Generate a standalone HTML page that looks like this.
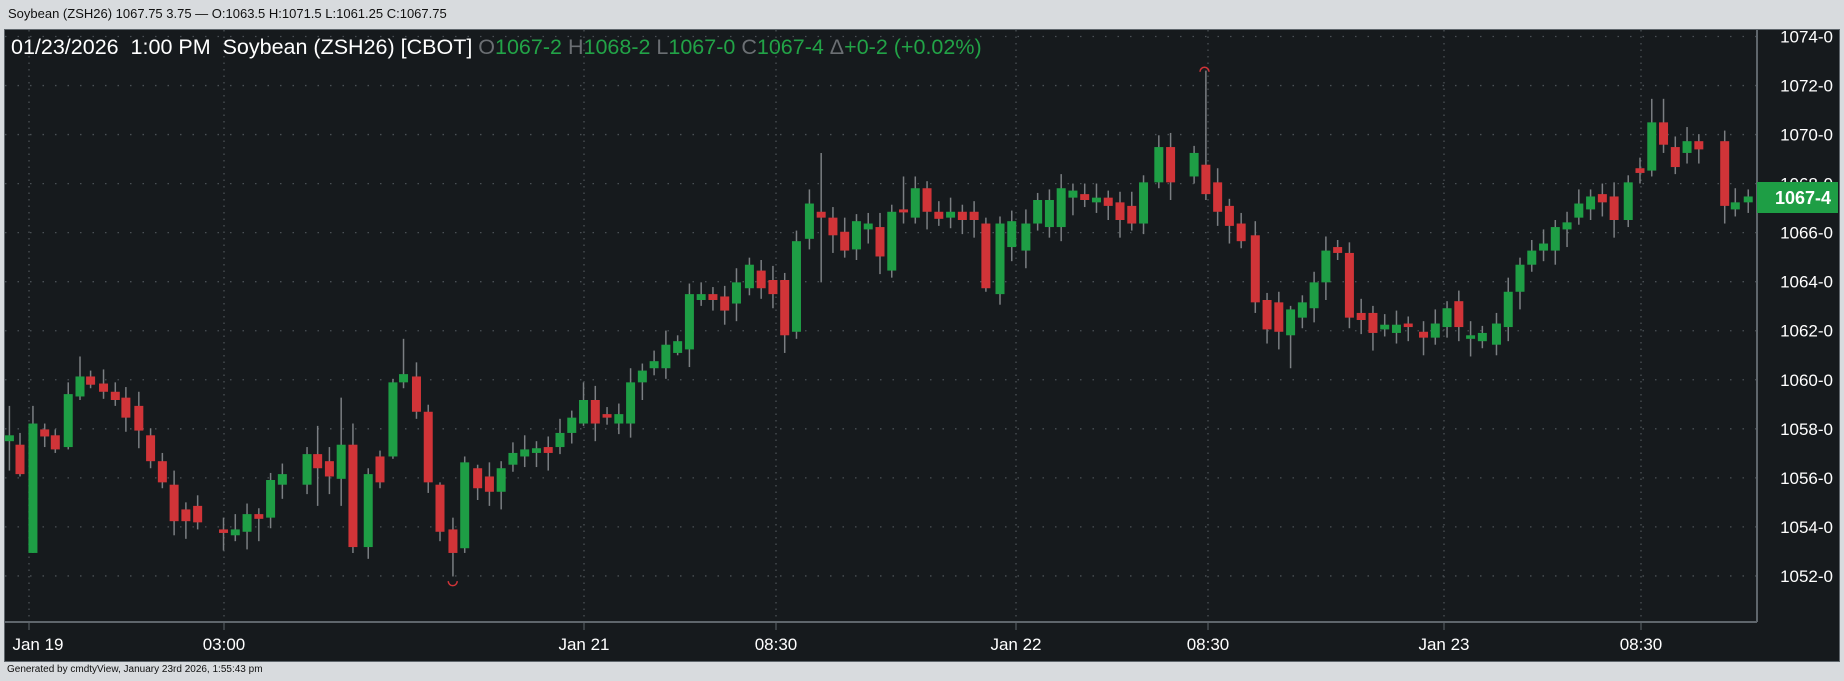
<!DOCTYPE html>
<html><head><meta charset="utf-8"><style>
body{margin:0;width:1844px;height:681px;background:#d8dbde;overflow:hidden;font-family:"Liberation Sans",sans-serif;position:relative}
#top{position:absolute;left:8px;top:6px;font-size:13px;color:#111}
#foot{position:absolute;left:7px;top:664px;font-size:10px;color:#111}
#panel{position:absolute;left:4px;top:29px;width:1834px;height:631px;background:#161a1d;border:1px solid #5f666c}
svg{position:absolute;left:0;top:0}
.ttl{position:absolute;left:11px;top:35px;font-size:21.5px;color:#fff;white-space:nowrap}
.g{color:#22a347}.d{color:#6b6f73}
</style></head><body>
<div id="top">Soybean (ZSH26) 1067.75 3.75 — O:1063.5 H:1071.5 L:1061.25 C:1067.75</div>
<div id="panel"></div>
<svg id="s" width="1844" height="681"></svg>
<div class="ttl">01/23/2026&nbsp; 1:00 PM&nbsp; Soybean (ZSH26) [CBOT] <span class="d">O</span><span class="g">1067-2</span> <span class="d">H</span><span class="g">1068-2</span> <span class="d">L</span><span class="g">1067-0</span> <span class="d">C</span><span class="g">1067-4</span> <span class="d">Δ</span><span class="g">+0-2 (+0.02%)</span></div>
<div id="foot">Generated by cmdtyView, January 23rd 2026, 1:55:43 pm</div>
<script>
const S=1/0.85,ns="http://www.w3.org/2000/svg",svg=document.getElementById('s');
function el(t,a,txt){const e=document.createElementNS(ns,t);for(const k in a)e.setAttribute(k,a[k]);if(txt)e.textContent=txt;svg.appendChild(e);return e;}
const R='#d13438',G='#1e9e45';
const py=p=>36.5+(1074-p)*24.52;
for(let p=1052;p<=1074;p+=2){const y=py(p);el('line',{x1:5,x2:1756,y1:y,y2:y,stroke:'#4a5055','stroke-width':1.3,'stroke-dasharray':'1.5 11'});
el('text',{x:1833,y:y+6,fill:'#fff','font-size':17,'text-anchor':'end','font-family':'Liberation Sans'},p+'-0');}
const xs=[[29,'Jan 19',38],[224,'03:00',224],[584,'Jan 21',584],[776,'08:30',776],[1016,'Jan 22',1016],[1208,'08:30',1208],[1444,'Jan 23',1444],[1641,'08:30',1641]];
xs.forEach(([x,t,tx])=>{el('line',{x1:x,x2:x,y1:30,y2:622,stroke:'#4a5055','stroke-width':1.3,'stroke-dasharray':'1.5 5'});
el('line',{x1:x,x2:x,y1:622,y2:630,stroke:'#5f666c'});
el('text',{x:tx,y:650,fill:'#fff','font-size':17,'text-anchor':'middle','font-family':'Liberation Sans'},t);});
el('line',{x1:4,x2:1757,y1:622,y2:622,stroke:'#5f666c','stroke-width':2});
el('line',{x1:1757,x2:1757,y1:29,y2:622,stroke:'#5f666c','stroke-width':2});
const d=[[8,370,375,345,400,'g'],[17,378,403,368,405,'r'],[28,360,470,345,470,'g'],[38,365,371,360,380,'r'],[47,370,382,365,385,'r'],[58,335,380,325,382,'g'],[68,320,337,303,340,'g'],[77,320,327,315,330,'r'],[88,326,333,0,0,'r'],[98,333,340,325,345,'r'],[107,338,355,0,0,'r'],[118,345,366,0,0,'r'],[128,370,392,0,0,'r'],[138,392,410,385,415,'r'],[148,412,443,0,0,'r'],[158,433,443,0,0,'r'],[168,430,444,0,0,'r'],[190,450,453,440,468,'r'],[200,450,455,437,460,'g'],[210,437,452,0,0,'g'],[220,437,441,432,460,'r'],[230,408,440,0,0,'g'],[240,403,412,0,0,'g'],[261,386,412,380,420,'g'],[270,386,398,362,430,'r'],[280,392,405,380,420,'r'],[290,378,407,338,430,'g'],[300,378,465,360,470,'r'],[313,403,465,398,475,'g'],[323,388,410,383,415,'r'],[334,325,388,322,390,'g'],[343,318,325,288,330,'g'],[354,320,350,0,0,'r'],[364,350,410,0,0,'r'],[374,412,452,410,460,'r'],[385,450,470,440,490,'r'],[395,393,466,388,470,'g'],[406,398,415,395,425,'r'],[416,405,418,0,0,'r'],[426,398,418,0,0,'g'],[436,385,395,0,0,'g'],[446,382,388,0,0,'g'],[456,381,385,0,0,'g'],[466,380,385,0,0,'r'],[476,368,380,0,0,'g'],[486,355,368,0,0,'g'],[496,340,360,325,362,'g'],[506,340,360,0,0,'r'],[516,352,355,0,0,'r'],[526,352,360,0,0,'g'],[536,325,360,0,0,'g'],[546,315,325,0,0,'g'],[556,307,313,0,0,'g'],[566,293,313,0,0,'g'],[576,290,300,285,302,'g'],[586,250,297,0,0,'g'],[596,250,255,240,260,'g'],[606,250,255,0,0,'r'],[616,252,264,0,0,'r'],[626,240,258,0,0,'g'],[637,225,245,0,0,'g'],[647,230,245,0,0,'r'],[657,238,250,0,0,'r'],[667,238,285,0,0,'r'],[677,205,282,0,0,'g'],[688,173,203,0,0,'g'],[698,180,185,130,240,'r'],[708,185,200,0,0,'r'],[718,197,213,0,0,'r'],[728,188,212,0,0,'g'],[738,190,195,0,0,'g'],[748,193,218,0,0,'r'],[758,180,230,0,0,'g'],[768,178,180,150,190,'r'],[778,160,185,150,190,'g'],[788,160,180,0,0,'r'],[798,180,186,0,0,'r'],[808,180,185,0,0,'g'],[818,180,187,0,0,'r'],[828,180,187,0,0,'r'],[838,190,245,185,248,'r'],[850,190,250,0,0,'g'],[860,188,210,0,0,'g'],[872,190,213,0,0,'g'],[882,170,190,0,0,'g'],[892,170,193,0,0,'g'],[902,160,193,0,0,'g'],[912,162,168,0,0,'g'],[922,165,170,0,0,'r'],[932,168,172,0,0,'g'],[942,168,175,0,0,'r'],[952,172,187,0,0,'r'],[962,175,190,0,0,'r'],[972,155,190,0,0,'g'],[985,125,155,115,160,'g'],[995,125,155,0,0,'r'],[1015,130,150,0,0,'g'],[1025,140,165,60,170,'r'],[1035,155,180,0,0,'r'],[1045,175,192,0,0,'r'],[1055,190,205,0,0,'r'],[1067,200,257,0,0,'r'],[1077,255,280,0,0,'r'],[1087,257,282,0,0,'r'],[1097,263,285,260,313,'g'],[1107,257,270,0,0,'g'],[1117,240,262,0,0,'g'],[1127,213,240,0,0,'g'],[1137,210,215,0,0,'r'],[1147,215,270,0,0,'r'],[1157,266,272,0,0,'r'],[1167,266,283,0,0,'r'],[1177,276,280,0,0,'g'],[1187,276,283,0,0,'g'],[1197,275,278,0,0,'r'],[1210,282,287,0,0,'r'],[1220,275,287,0,0,'g'],[1230,262,278,0,0,'g'],[1240,256,278,0,0,'r'],[1250,285,288,0,0,'g'],[1260,283,290,0,0,'g'],[1272,275,293,0,0,'g'],[1282,248,278,0,0,'g'],[1292,225,248,0,0,'g'],[1302,213,225,0,0,'g'],[1312,207,213,0,0,'g'],[1322,193,213,0,0,'g'],[1332,189,195,0,0,'g'],[1342,173,185,0,0,'g'],[1352,167,178,0,0,'g'],[1362,165,172,0,0,'r'],[1372,167,187,0,0,'r'],[1384,155,187,0,0,'g'],[1394,143,147,0,0,'r'],[1404,104,145,84,150,'g'],[1414,104,123,84,130,'r'],[1424,125,142,0,0,'r'],[1434,120,130,0,0,'g'],[1444,120,127,0,0,'r'],[1466,120,175,0,0,'r'],[1475,172,178,0,0,'g'],[1486,167,172,0,0,'g']];
d.forEach(([x,a,b,h,l,c],i)=>{const col=c=='g'?G:R;if(!h){h=a-6-(i%3)*3;l=b+6+(i%4)*3;}
const X=x*S;el('line',{x1:X,x2:X,y1:h*S,y2:l*S,stroke:'#7a7e82','stroke-width':1.5});
el('rect',{x:X-4.5,y:a*S,width:9,height:Math.max(3,(b-a)*S),fill:col});});
el('path',{d:`M${381*S} ${494*S} a4 4 0 0 0 9 0`,stroke:R,fill:'none','stroke-width':1.5});
el('path',{d:`M${1020*S} ${61*S} a4 4 0 0 1 9 0`,stroke:R,fill:'none','stroke-width':1.5});
el('rect',{x:1757,y:182,width:81,height:31,fill:'#1e9e45'});
el('text',{x:1831,y:204,fill:'#fff','font-size':18,'font-weight':'bold','text-anchor':'end','font-family':'Liberation Sans'},'1067-4');
</script>
</body></html>
